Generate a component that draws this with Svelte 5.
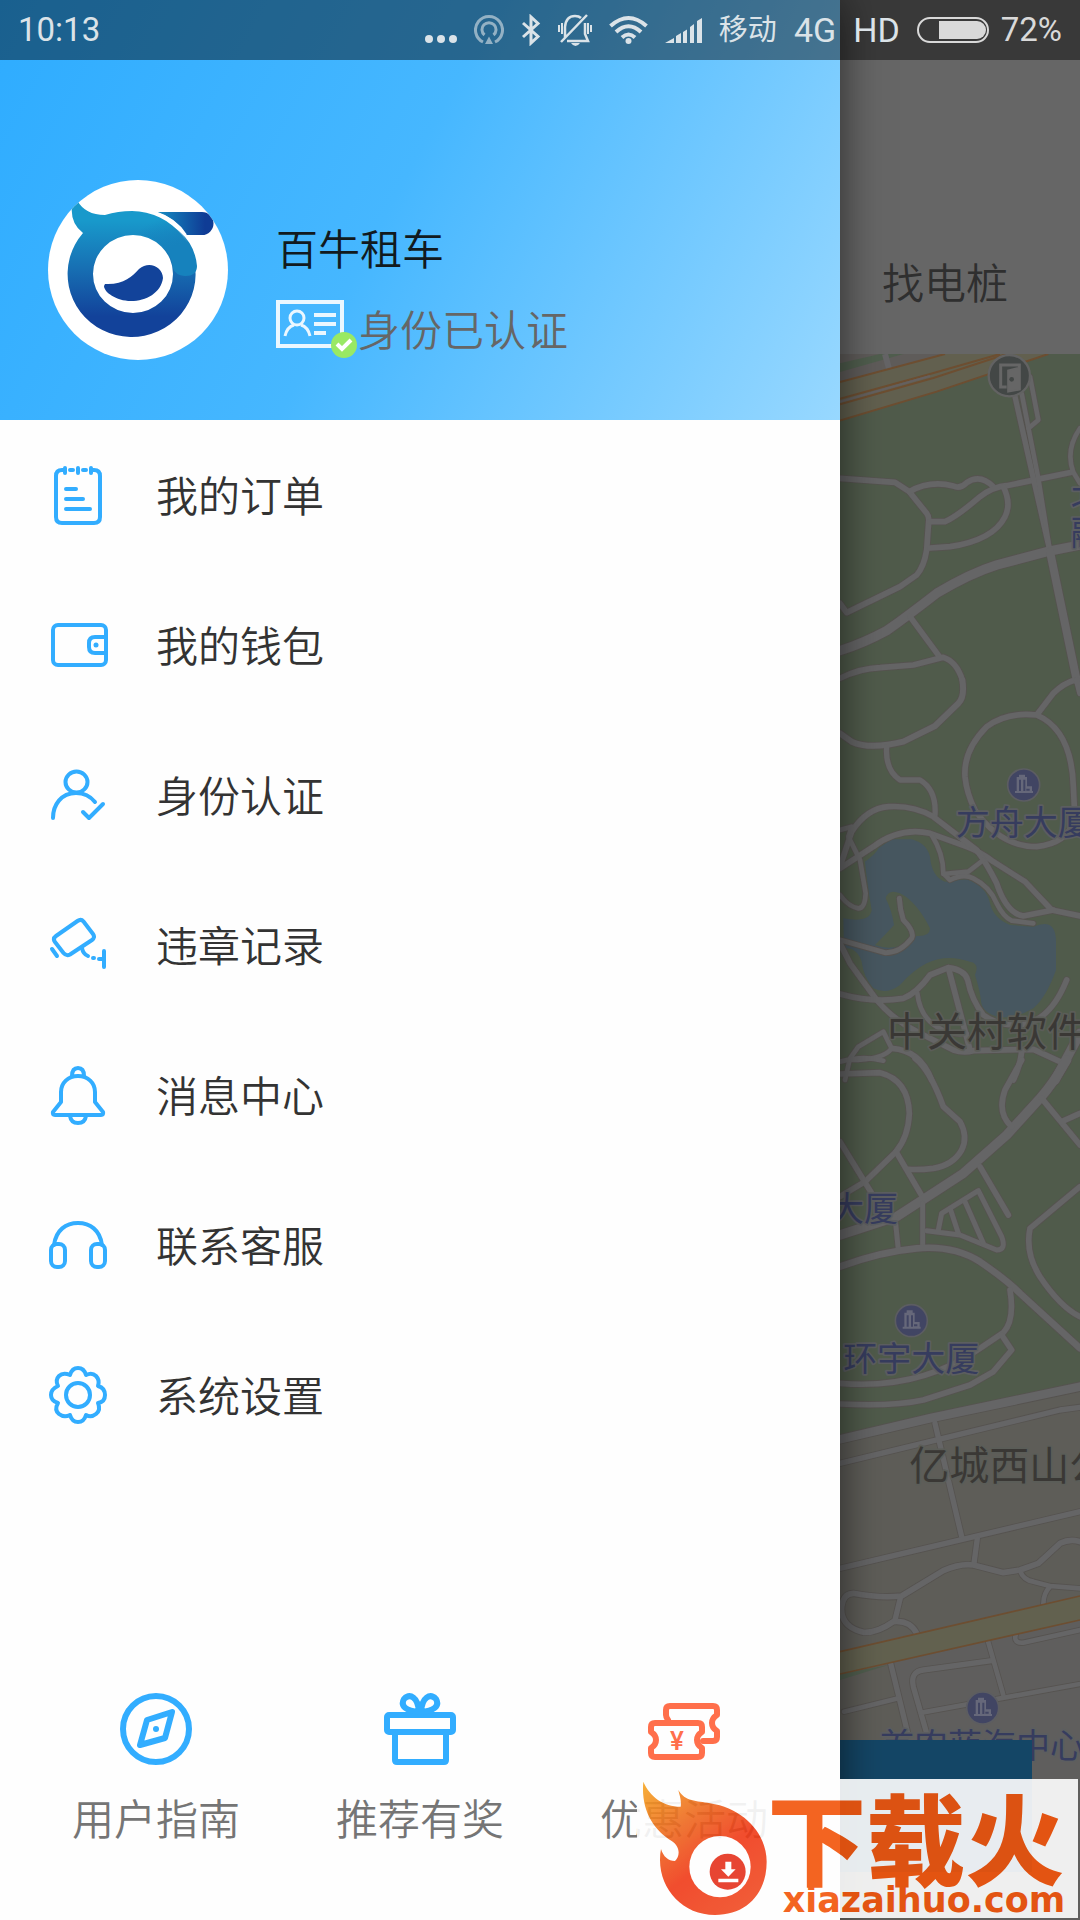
<script lang="ts">
	const menu = [
		{ id: 'orders', label: '我的订单' },
		{ id: 'wallet', label: '我的钱包' },
		{ id: 'identity', label: '身份认证' },
		{ id: 'violations', label: '违章记录' },
		{ id: 'messages', label: '消息中心' },
		{ id: 'support', label: '联系客服' },
		{ id: 'settings', label: '系统设置' }
	];

	const shortcuts = [
		{ id: 'guide', label: '用户指南' },
		{ id: 'invite', label: '推荐有奖' },
		{ id: 'deals', label: '优惠活动' }
	];

	// map tiles, top to bottom: y is the tile's offset, each road is [path, width]
	const tiles: { y: number; roads: [string, number][] }[] = [
		{
			y: -402,
			roads: [
				['M60 775 225 787 268 815 320 880Q328 890 326 905L320 990Q312 1040 290 1065L240 1100 80 1178 60 1150', 17],
				['M268 815Q330 780 400 798 420 808 440 788 480 760 520 800', 17],
				['M330 905H375Q410 890 480 830 520 800 560 797L755 757', 17],
				['M330 984 390 980Q520 960 555 890 575 850 550 800', 17],
				['M60 1292Q130 1270 200 1232 260 1190 350 1120 450 1060 530 1035L680 995 780 975', 28],
				['M585 530 640 775 690 995', 16],
				['M605 520 655 775 690 995', 14],
				['M690 995 770 1380', 24],
				['M630 470 655 600 625 625', 14],
				['M270 1190 360 1312', 17],
				['M60 1375Q120 1345 180 1343L280 1335 370 1312Q410 1325 427 1380', 17],
				['M780 625Q735 690 760 757L780 790', 14]
			]
		},
		{
			y: 978,
			roads: [
				['M427 0Q435 50 415 70L345 138 250 185Q150 210 95 185L60 160', 18],
				['M200 200Q195 270 240 300H300Q350 330 345 405', 16],
				['M60 565 160 500Q240 440 330 460L440 500Q480 515 520 545L615 605 695 690 780 708', 17],
				['M60 560 95 455Q140 385 205 380 280 375 340 410L470 510Q500 550 530 610 560 700 610 708L700 690', 17],
				['M60 450 95 440 85 470 120 540 137 640Q135 685 115 685 85 680 60 645', 14],
				['M335 465Q370 520 370 580L390 600Q430 580 460 595 510 620 530 670 550 710 575 722L640 730', 14],
				['M370 582 445 575 490 540', 14],
				['M650 105Q560 95 500 140 430 210 435 290 440 340 465 390 540 500 650 500 740 490 765 420L760 320Q755 150 650 105L700 40Q730 10 765 0', 17],
				['M770 0 780 40', 17],
				['M60 780 195 818Q240 820 275 775 285 755 250 720 240 690 238 655', 15],
				['M60 790 90 850 170 960Q220 1020 300 1060L400 1110Q430 1120 460 1112L640 1108 720 1145', 17],
				['M60 942Q160 970 250 955 290 940 330 885L385 863Q435 870 443 900 455 960 490 1005 540 1040 600 1035 690 1025 740 900', 17],
				['M385 863 450 1110', 17],
				['M292 940Q300 1010 350 1040 400 1070 440 1060', 14],
				['M75 1200 90 1135 115 1100 190 1055 215 1105Q190 1140 90 1140', 14],
				['M215 1105Q300 1110 335 1200', 17],
				['M605 1115Q600 1160 580 1200', 17],
				['M780 1060 705 1200', 28]
			]
		},
		{
			y: 2118,
			roads: [
				['M60 42 180 38Q265 60 268 160 265 230 228 275L135 365 60 410', 17],
				['M60 5Q130 -15 190 2', 14],
				['M60 245 155 400', 17],
				['M285 -5Q330 30 370 140L420 185Q445 230 425 270 400 315 340 325 300 330 265 328', 17],
				['M228 275 310 415', 17],
				['M60 525 230 470 310 418 430 340 560 225 660 115Q700 70 740 0', 28],
				['M605 0 555 90Q530 160 575 200', 17],
				['M665 115 780 255', 17],
				['M725 185 780 160', 17],
				['M225 470 235 570', 15],
				['M308 430V565', 15],
				['M60 620Q180 575 290 565 400 555 480 605 560 660 600 700L780 865', 20],
				['M570 690Q585 780 550 818L480 865Q300 990 60 970', 17],
				['M545 825 575 870 520 935 450 975 310 1020Q220 1040 60 1032', 17],
				['M320 512 420 525 530 570Q560 570 545 530L475 392 365 460 355 510', 15],
				['M392 450 415 520M435 425 490 550', 15],
				['M480 320 565 465', 17],
				['M780 380 630 505Q615 580 660 650 720 740 780 770', 17]
			]
		},
		{
			y: 3138,
			roads: [
				['M60 118 330 55 780 -40', 26],
				['M60 190 720 30 780 22', 16],
				['M345 70 425 410', 16],
				['M60 505 780 335', 16],
				['M472 415 462 490', 16],
				['M290 700Q270 660 220 665 170 700 130 697 60 680 65 620 70 580 100 580 180 595 245 588L370 512Q420 490 460 495L550 518 600 510 655 490 720 430Q750 415 780 425', 17],
				['M242 590 225 660', 16],
				['M600 512Q610 540 640 545L690 558 780 565M690 560Q670 580 670 612', 14],
				['M212 790 262 995', 16],
				['M72 935 235 895', 14],
				['M320 1000 280 860Q270 815 310 810L515 782', 16],
				['M503 720 550 885', 14],
				['M305 938 780 852', 14],
				['M587 705Q580 730 610 728L780 690', 14]
			]
		}
	];

	const places = [
		{ name: '北京', x: 692, y: 462, size: 102, kind: 'poi' },
		{ name: '融科', x: 692, y: 572, size: 102, kind: 'poi' },
		{ name: '方舟大厦', x: 347, y: 1442, size: 102, kind: 'poi' },
		{ name: '中关村软件园', x: 141, y: 2076, size: 120, kind: 'area' },
		{ name: '大厦', x: -30, y: 2600, size: 102, kind: 'poi' },
		{ name: '环宇大厦', x: 10, y: 3050, size: 102, kind: 'poi' },
		{ name: '亿城西山公馆', x: 208, y: 3378, size: 120, kind: 'area' },
		{ name: '首农蓝海中心', x: 120, y: 4212, size: 102, kind: 'poi' }
	];

	const pins = [
		[551, 1293],
		[214, 2900],
		[428, 4062]
	];
</script>

<div class="screen">
	<header class="status">
		<time>10:13</time>
		<div class="indicators">
			<svg width="32" height="32" viewBox="0 0 32 32" fill="currentColor">
				<circle cx="4" cy="25" r="4" /><circle cx="16" cy="25" r="4" /><circle cx="28" cy="25" r="4" />
			</svg>
			<svg class="dim" width="30" height="32" viewBox="0 0 30 32" fill="none" stroke="currentColor" stroke-width="3">
				<path d="M9 28A13.500 13.500 0 1 1 21 28M10.500 21A7 7 0 1 1 19.500 21" />
				<path d="M15 22.500 19 30H11z" fill="currentColor" stroke="none" />
			</svg>
			<svg width="20" height="32" viewBox="0 0 20 32" fill="none" stroke="currentColor" stroke-width="3">
				<path d="M2 9 17 22.500 10 29V3L17 9.500 2 23" />
			</svg>
			<svg width="34" height="32" viewBox="0 0 34 32" fill="none" stroke="currentColor" stroke-width="2.500">
				<path d="M7 24V13Q8 2 17 2 21 2 23 4M27 9V20L30 27H9M29 1 3 28" />
				<path d="M1 11V18M4 9V20M30 9V20M33 11V18" stroke-width="2" />
				<path d="M13 29H22Q20 32 17.500 32T13 29z" fill="currentColor" stroke="none" />
			</svg>
			<svg width="39" height="32" viewBox="0 0 39 32" fill="none" stroke="currentColor" stroke-width="4">
				<path d="M1.500 12Q19.500 -4 37.500 12M7 18Q19.500 6.500 32 18M13 23.500Q19.500 17.500 26 23.500" />
				<circle cx="19.500" cy="27" r="3" fill="currentColor" stroke="none" />
			</svg>
			<svg width="37" height="32" viewBox="0 0 37 32" fill="currentColor">
				<path d="M0 29 9 24V29zM11 22 16 19V29H11zM18 18 22 15.500V29H18zM25 13 29 10V29H25zM32 7 37 4V29H32z" />
			</svg>
			<span class="carrier">移动</span>
			<span class="network">4G</span>
			<span class="network">HD</span>
			<div class="battery">
				<svg width="72" height="32" viewBox="0 0 72 32" fill="none" stroke="currentColor" stroke-width="2">
					<rect x="1" y="4" width="70" height="24" rx="12" />
					<path d="M22 7H60A9 9 0 0 1 60 25H22z" fill="currentColor" stroke="none" />
				</svg>
				<span>72%</span>
			</div>
		</div>
	</header>

	<aside class="drawer">
		<section class="profile">
			<svg class="avatar" viewBox="0 0 180 180" role="img" aria-label="百牛租车">
				<defs>
					<linearGradient id="ring" x1="0" y1="0" x2="0" y2="1">
						<stop offset="0.150" stop-color="#1899cb" />
						<stop offset="0.500" stop-color="#176fb3" />
						<stop offset="0.850" stop-color="#12429a" />
					</linearGradient>
					<linearGradient id="tail">
						<stop offset="0" stop-color="#168fc5" />
						<stop offset="0.850" stop-color="#0f3c95" />
					</linearGradient>
					<linearGradient id="tip" x1="0" y1="0" x2="0.500" y2="1">
						<stop offset="0.200" stop-color="#1682bd" stop-opacity="0" />
						<stop offset="0.700" stop-color="#1682bd" />
					</linearGradient>
					<clipPath id="disc"><circle cx="90" cy="90" r="90" /></clipPath>
				</defs>
				<circle cx="90" cy="90" r="90" fill="#fff" />
				<g clip-path="url(#disc)">
					<path
						d="M29 20Q37 35 57 35 70 31 84 31A64 63 0 1 1 35 53Q22 43 24 26zM85 55A40 39 0 1 0 85 133 40 39 0 0 0 85 55z"
						fill="url(#ring)"
						fill-rule="evenodd"
					/>
					<path d="M100 34Q146 50 149 86 149 96 137 96 127 95 125 88 122 60 90 54z" fill="url(#tip)" />
					<path d="M108 32H154A11 11 0 0 1 154 55H138Q128 38 108 32z" fill="url(#tail)" />
					<path d="M107 32Q128 39 138 55" fill="none" stroke="#fff" stroke-width="2" />
					<path d="M57 104C75 105 84 97 91 89 101 80 115 87 115 98 113 113 98 121 83 121 68 121 56 112 56 106z" fill="#12439a" />
				</g>
			</svg>
			<div class="who">
				<h1>百牛租车</h1>
				<p>
					<svg width="82" height="60" viewBox="0 0 82 60" fill="none" stroke="#ebf7ff">
						<rect x="2" y="2" width="64" height="44" stroke-width="4" />
						<circle cx="21" cy="18" r="7" stroke-width="3" />
						<path d="M9 36Q11 27 18 25M25 25Q32 27 34 36" stroke-width="3" />
						<path d="M38 15H60M38 24H60M38 33H50" stroke-width="4" />
						<circle cx="68" cy="45" r="13" fill="#99e964" stroke="none" />
						<path d="M61 44 66 49 75 40" stroke="#fff" stroke-width="4" />
					</svg>
					<span>身份已认证</span>
				</p>
			</div>
		</section>

		<nav class="menu">
			{#each menu as item}
				<a href="#{item.id}">
					<svg width="60" height="60" viewBox="0 0 60 60">
						{#if item.id === 'orders'}
							<path d="M17 4H14Q8 4 8 10V51Q8 57 14 57H46Q52 57 52 51V10Q52 4 46 4H43" />
							<path d="M17 2V7M30 2V7M43 2V7M22 4H25M35 4H38M18 23H28M18 33H35M18 43H42" />
						{:else if item.id === 'wallet'}
							<rect x="5" y="9" width="53" height="40" rx="5" />
							<path d="M58 21H47Q41 21 41 27V31Q41 37 47 37H58" />
							<circle class="dot" cx="48" cy="29" r="2.500" />
						{:else if item.id === 'identity'}
							<ellipse cx="28.500" cy="16" rx="11" ry="10.500" />
							<path d="M5 52C5 39 13 27 28 27 37 27 43 31 47 36M35 46 41 52 55 38" />
						{:else if item.id === 'violations'}
							<path d="M29.500 5 8 20Q4.500 22.500 7 26L15.500 37Q18.500 40.500 22 38.500L44 24Q47.500 21.500 45 18L35.500 5.500Q33 2.500 29.500 5z" />
							<path d="M4 33 9 40M34 32Q35 38 40 40M45 42H46M51 43H56M56 35V51" />
						{:else if item.id === 'messages'}
							<path d="M30 10C20 10 13 17 13 26V36L5 46Q4 49 7 49H53Q56 49 55 46L47 36V26C47 17 40 10 30 10z" />
							<path d="M24 10Q24 2 30 2T36 10M22 50Q23 57 30 57T38 50" />
						{:else if item.id === 'support'}
							<rect x="3" y="28" width="14" height="23" rx="6" />
							<rect x="43" y="28" width="14" height="23" rx="6" />
							<path d="M6 29C8 14 18 7 30 7S52 14 54 29" />
						{:else}
							<path
								d="M50 20Q57 22 57 29T50 37Q53 44 48 48T38 49Q36 56 30 56T22 49Q16 52 11 48T10 37Q3 35 3 29T10 20Q7 14 11 10T22 9Q24 2 30 2T38 9Q44 6 48 10T50 20z"
							/>
							<circle cx="30" cy="29" r="12" />
						{/if}
					</svg>
					<span>{item.label}</span>
				</a>
			{/each}
		</nav>

		<nav class="shortcuts">
			{#each shortcuts as item}
				<a href="#{item.id}">
					<svg class={item.id} width="72" height="72" viewBox="0 0 72 72">
						{#if item.id === 'guide'}
							<circle cx="36" cy="36" r="33" />
							<path d="M52 19 27 27 20 52 45 45z" />
							<circle class="dot" cx="36" cy="36" r="3" />
						{:else if item.id === 'invite'}
							<rect x="3" y="22" width="66" height="17" rx="2" />
							<path d="M11 39V67Q11 69 13 69H60Q62 69 62 67V39" />
							<path d="M35 19C22 18 16 13 20 6 26 0 34 4 35 19zM37 19C50 18 56 13 52 6 46 0 38 4 37 19z" />
						{:else}
							<path d="M20 27Q18 24 18 22V17Q18 13 22 13H65Q69 13 69 17V22Q64 25 64 30T69 38V44Q69 48 65 48H55" />
							<path d="M7 30H50Q54 30 54 34V39Q49 42 49 47T54 55V60Q54 64 50 64H7Q3 64 3 60V55Q8 52 8 47T3 39V34Q3 30 7 30z" />
							<text x="29" y="57" text-anchor="middle">¥</text>
						{/if}
					</svg>
					<span>{item.label}</span>
				</a>
			{/each}
		</nav>
	</aside>

	<main class="page">
		<div class="tab">找电桩</div>
		<div class="map">
			<svg viewBox="0 0 720 4698" preserveAspectRatio="xMinYMin slice">
				<rect width="720" height="4698" fill="#505b4b" />
				<g transform="translate(-60 -402)">
					<path d="M60 402H400L60 486z" fill="#5f5c5a" />
					<path d="M60 430 180 402H250L60 456z" fill="#505e4e" />
					<path d="M195 402 208 450" stroke="#656466" stroke-width="18" />
					<path d="M60 486 375 402H685L350 515 60 602z" fill="#62604f" />
					<path d="M60 486 375 402M60 602 350 515 685 402" fill="none" stroke="#6d4e31" stroke-width="6" />
					<path d="M60 536 330 462 540 402M60 553 340 474 560 402" fill="none" stroke="#6d4e31" stroke-width="6" />
					<path d="M60 545 330 468" stroke="#656060" stroke-width="6" />
				</g>
				<g transform="translate(-60 978)">
					<path
						d="M135 545Q170 520 175 505L215 478H275Q320 490 330 530 335 590 375 605L440 598Q500 620 510 670 520 715 570 735L640 740Q710 710 708 790V870Q680 950 640 985 590 1015 540 1012 490 1000 484 970 480 930 465 885 480 850 450 845 380 820 320 850 280 870 240 915 200 945 160 925 130 890 125 845 110 800 72 805L70 715Q150 730 155 690 140 600 135 545z"
						fill="#475760"
					/>
					<path d="M197 655Q205 625 240 640 290 665 330 745 330 770 290 768 230 820 165 795 200 760 222 735 215 690 197 655z" fill="#505b4b" />
				</g>
				<g transform="translate(-60 3138)">
					<path d="M60 118 780 -40V1600H60z" fill="#5e5d58" />
					<path d="M215 790 780 660V1600H400z" fill="#5f5e5d" />
				</g>
				{#each tiles as tile}
					<g class="casing" transform="translate(-60 {tile.y})">
						{#each tile.roads as [d, width]}
							<path {d} stroke-width={width + 5} />
						{/each}
					</g>
				{/each}
				{#each tiles as tile}
					<g class="road" transform="translate(-60 {tile.y})">
						{#each tile.roads as [d, width]}
							<path {d} stroke-width={width} />
						{/each}
					</g>
				{/each}
				<g transform="translate(-60 3138)">
					<path d="M60 822 205 795 60 840z" fill="#505e4e" />
					<path d="M60 755 780 588V660L60 822z" fill="#62614f" />
					<path d="M60 755 780 588M780 660 60 822" stroke="#6d4e31" stroke-width="5" />
				</g>
				<g transform="translate(508 65)">
					<circle r="62" fill="#434746" stroke="#626262" stroke-width="7" />
					<path d="M-8 34H-26V-32H30V40L-2 46V-14L28 -22" fill="none" stroke="#666" stroke-width="9" />
					<path d="M-2 -14 30 -24V40L-2 46z" fill="#666" />
					<circle cx="7" cy="11" r="7" fill="#434746" />
				</g>
				{#each places as place}
					<text class={place.kind} x={place.x} y={place.y} font-size={place.size}>{place.name}</text>
				{/each}
				{#each pins as [x, y]}
					<g transform="translate({x} {y})">
						<circle r="48" fill="#414563" stroke="#5c5d62" stroke-width="5" />
						<path d="M-26 18H-21V-24H-14V-31H4V-24H10V4H25V18H28V24H-26z" fill="#66687a" />
						<path d="M-11 -16V18M2 -16V18M8 14H18" fill="none" stroke="#414563" stroke-width="6" />
					</g>
				{/each}
			</svg>
			<button class="book" aria-label="立即用车"></button>
		</div>
	</main>

	<div class="watermark">
		<svg viewBox="231 357 1323 417" role="img" aria-label="下载火 xiazaihuo.com">
			<defs>
				<linearGradient id="flame" x1="0" y1="0" x2="0.700" y2="1">
					<stop offset="0" stop-color="#f7a823" />
					<stop offset="0.350" stop-color="#ee6b20" />
					<stop offset="0.650" stop-color="#f03a18" />
					<stop offset="1" stop-color="#f04a22" />
				</linearGradient>
			</defs>
			<path
				d="M250 365C270 410 310 440 362 440 365 420 358 405 355 390 375 425 410 422 450 430 550 445 620 520 620 605 620 700 560 765 465 765 370 765 300 690 300 600Q300 580 303 567C310 590 325 603 345 603 360 590 362 560 335 543 280 510 242 450 250 365z"
				fill="url(#flame)"
			/>
			<circle cx="480" cy="620" r="92" fill="#fff" />
			<circle cx="503" cy="635" r="54" fill="#e5321c" />
			<path d="M496 605H514V628H527L505 650 483 628H496zM475 656H535V667H475z" fill="#fff" />
			<text class="brand" x="622" y="654">下载火</text>
			<text class="site" x="668" y="755">xiazaihuo.com</text>
		</svg>
	</div>
</div>

<style>
	:global(body) {
		margin: 0;
		background: #666;
	}

	.screen {
		position: relative;
		display: grid;
		grid-template-columns: minmax(0, 1fr) 240px;
		min-height: 100vh;
		overflow: hidden;
		font-family: 'Noto Sans CJK SC', sans-serif;
		font-size: 42px;
		font-weight: 350;
		line-height: 60px;
	}

	a {
		color: inherit;
		text-decoration: none;
	}

	svg {
		display: block;
		flex: none;
	}

	.status {
		position: absolute;
		z-index: 3;
		top: 0;
		left: 0;
		right: 0;
		display: flex;
		align-items: center;
		justify-content: space-between;
		height: 60px;
		padding: 0 18px;
		background: rgba(0, 0, 0, 0.44);
		color: #dbe3e8;
		font-family: Roboto, 'Noto Sans CJK SC', sans-serif;
		font-size: 33px;
		font-weight: 400;
	}

	.indicators {
		display: flex;
		align-items: center;
		gap: 17px;
	}

	.dim {
		opacity: 0.6;
	}

	.carrier {
		font-size: 29px;
	}

	.network {
		font-size: 34px;
	}

	.battery {
		display: flex;
		align-items: center;
		gap: 12px;
		color: #d9d9d9;
	}

	.drawer {
		position: relative;
		z-index: 1;
		display: flex;
		flex-direction: column;
		background: #fefefe;
		box-shadow: 0 0 40px rgba(0, 0, 0, 0.6);
	}

	.profile {
		display: flex;
		gap: 48px;
		padding: 180px 48px 60px;
		background: linear-gradient(118deg, #2eacff 0%, #46b7ff 47%, #98d8ff 100%);
	}

	.avatar {
		width: 180px;
		height: 180px;
	}

	.who {
		display: flex;
		flex-direction: column;
		justify-content: flex-end;
		gap: 25px;
	}

	.who h1,
	.who p {
		margin: 0;
		font-size: 42px;
		font-weight: inherit;
		line-height: 56px;
	}

	.who h1 {
		color: #111a20;
	}

	.who p {
		display: flex;
		color: #666;
	}

	.menu {
		flex: 1;
		padding-top: 1px;
		color: #333;
	}

	.menu a {
		display: flex;
		align-items: center;
		gap: 48px;
		height: 150px;
		padding-left: 48px;
	}

	.menu span {
		padding-bottom: 4px;
	}

	.menu svg,
	.shortcuts svg {
		fill: none;
		stroke: #32adff;
		stroke-width: 4;
		stroke-linecap: round;
		stroke-linejoin: round;
	}

	.menu .dot,
	.shortcuts .dot {
		fill: #32adff;
		stroke: none;
	}

	.shortcuts {
		display: grid;
		grid-template-columns: repeat(3, 1fr);
		padding: 0 24px 73px;
		color: #757575;
	}

	.shortcuts a {
		display: flex;
		flex-direction: column;
		align-items: center;
		gap: 22px;
	}

	.shortcuts svg {
		stroke-width: 6;
	}

	.shortcuts .deals {
		stroke: #ff6f4b;
	}

	.deals text {
		fill: #ff6f4b;
		stroke: none;
		font-family: Roboto, sans-serif;
		font-size: 26px;
		font-weight: 500;
	}

	.page {
		display: flex;
		flex-direction: column;
		min-width: 0;
		background: #666;
	}

	.tab {
		padding: 251px 0 43px 42px;
		color: #2f2f2f;
		white-space: nowrap;
	}

	.map {
		position: relative;
		flex: 1;
		font-weight: 400;
	}

	.map > svg {
		position: absolute;
		width: 100%;
		height: 100%;
	}

	.casing,
	.road {
		fill: none;
		stroke-linecap: round;
		stroke-linejoin: round;
	}

	.casing {
		stroke: #565350;
	}

	.road {
		stroke: #656566;
	}

	.poi,
	.area {
		paint-order: stroke;
		stroke-width: 10;
		stroke-linejoin: round;
	}

	.poi {
		fill: #363c5e;
		stroke: #5c5e60;
	}

	.area {
		fill: #3a3835;
		stroke: #5b5d58;
	}

	.book {
		position: absolute;
		left: 0;
		right: 48px;
		bottom: 48px;
		height: 132px;
		border: 0;
		background: #144666;
	}

	.watermark {
		position: absolute;
		z-index: 2;
		right: 2px;
		bottom: 2px;
		width: 441px;
		background: #fff;
		opacity: 0.9;
	}

	.brand {
		fill: #f2540a;
		font-size: 297px;
		font-weight: 900;
	}

	.site {
		fill: #f2540a;
		font-family: 'DejaVu Sans', sans-serif;
		font-size: 105px;
		font-weight: 700;
	}
</style>
